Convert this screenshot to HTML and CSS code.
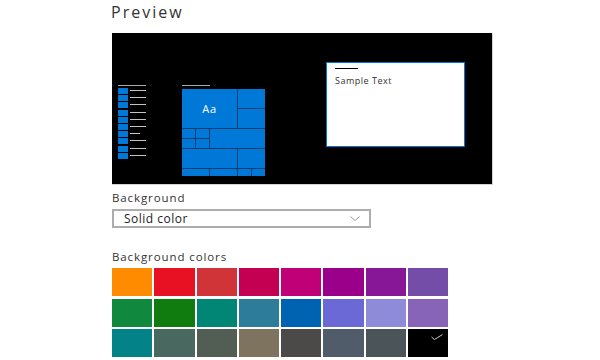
FILE: index.html
```html
<!DOCTYPE html>
<html lang="en">
<head>
  <meta charset="UTF-8">
  <title>Personalization - Background</title>
  <link rel="stylesheet" href="styles.css">
</head>
<body>

<h1 class="titulo">Preview</h1>

<div class="preview">
  <div class="inicio">
    <div class="raya"></div>
    <div class="lista">
      <div class="fila"><span class="cuadro"></span><span class="linea"></span></div>
      <div class="fila"><span class="cuadro"></span><span class="linea"></span></div>
      <div class="fila"><span class="cuadro"></span><span class="linea"></span></div>
      <div class="fila"><span class="cuadro"></span><span class="linea"></span></div>
      <div class="fila"><span class="cuadro"></span><span class="linea"></span></div>
      <div class="fila"><span class="cuadro"></span><span class="linea"></span></div>
      <div class="fila"><span class="cuadro"></span><span class="linea corta"></span></div>
      <div class="fila"><span class="cuadro"></span><span class="linea"></span></div>
      <div class="fila"><span class="cuadro"></span><span class="linea"></span></div>
      <div class="fila"><span class="cuadro"></span><span class="linea"></span></div>
    </div>
  </div>

  <div class="mosaico">
    <div class="raya"></div>
    <div class="tiles">
      <div class="tile t-grande">Aa</div>
      <div class="tile t-der1"></div>
      <div class="tile t-der2"></div>
      <div class="tile t-p1"></div>
      <div class="tile t-p2"></div>
      <div class="tile t-p3"></div>
      <div class="tile t-p4"></div>
      <div class="tile t-ancho"></div>
      <div class="tile t-fila5a"></div>
      <div class="tile t-fila5b"></div>
      <div class="tile t-fila6a"></div>
      <div class="tile t-fila6b"></div>
      <div class="tile t-fila6c"></div>
      <div class="tile t-fila6d"></div>
    </div>
  </div>

  <div class="ventana">
    <div class="ventana-barra"></div>
    <p class="ventana-texto">Sample Text</p>
  </div>
</div>

<p class="etiqueta">Background</p>

<div class="selector">
  <span class="selector-texto">Solid color</span>
  <svg class="chevron" width="10" height="5" viewBox="0 0 10 5">
    <path d="M0.5 0.5 L5 4.5 L9.5 0.5" fill="none" stroke="#9a9a9a" stroke-width="1"/>
  </svg>
</div>

<p class="etiqueta etiqueta-colores">Background colors</p>

<div class="colores">
  <div class="color" style="background:#ff8c00"></div>
  <div class="color" style="background:#e81123"></div>
  <div class="color" style="background:#d13438"></div>
  <div class="color" style="background:#c30052"></div>
  <div class="color" style="background:#bf0077"></div>
  <div class="color" style="background:#9a0089"></div>
  <div class="color" style="background:#881798"></div>
  <div class="color" style="background:#744da9"></div>

  <div class="color" style="background:#10893e"></div>
  <div class="color" style="background:#107c10"></div>
  <div class="color" style="background:#018574"></div>
  <div class="color" style="background:#2d7d9a"></div>
  <div class="color" style="background:#0063b1"></div>
  <div class="color" style="background:#6b69d6"></div>
  <div class="color" style="background:#8e8cd8"></div>
  <div class="color" style="background:#8764b8"></div>

  <div class="color" style="background:#038387"></div>
  <div class="color" style="background:#486860"></div>
  <div class="color" style="background:#525e54"></div>
  <div class="color" style="background:#7e735f"></div>
  <div class="color" style="background:#4c4a48"></div>
  <div class="color" style="background:#515c6b"></div>
  <div class="color" style="background:#4a5459"></div>
  <div class="color elegido" style="background:#000000">
    <svg class="check" width="12" height="6" viewBox="0 0 12 6">
      <path d="M0.5 3 L3.5 5.5 L11.5 0.5" fill="none" stroke="#c8c8c8" stroke-width="1"/>
    </svg>
  </div>
</div>

</body>
</html>
```

FILE: styles.css
```css
body {
  font-family: 'Open Sans', 'Noto Sans', sans-serif;
  background-color: #ffffff;
  color: #222;
  margin: 0;
  padding: 0 0 0 112px;
  overflow: hidden;
}

.titulo {
  margin: 0 0 0 -1px;
  padding-top: 2px;
  height: 20px;
  font-size: 16px;
  line-height: 20px;
  font-weight: 400;
  letter-spacing: 2px;
  color: #333;
}

/* caja negra de vista previa */
.preview {
  width: 381px;
  height: 152px;
  margin-top: 11px;
  background-color: #000;
  border-right: 1px solid #d4d4d4;
  border-bottom: 1px solid #d4d4d4;
  box-sizing: border-box;
  display: flex;
  align-items: flex-start;
  padding: 29px 0 0 6px;
}

.raya {
  height: 1px;
  width: 28px;
  background-color: #a8a8a8;
}

.inicio {
  margin-top: 23px;
  width: 28px;
}

.inicio .raya {
  margin-bottom: 2px;
}

.lista {
  display: flex;
  flex-direction: column;
  gap: 1.2px;
}

.fila {
  display: flex;
  align-items: flex-start;
  height: 6px;
}

.cuadro {
  width: 10px;
  height: 6px;
  background-color: #0078d7;
}

.linea {
  width: 16px;
  height: 1px;
  margin: 2px 0 0 1.5px;
  background-color: #c4c4c4;
}

.linea.corta {
  width: 10px;
}

.mosaico {
  margin: 23px 0 0 36px;
  width: 83px;
}

.mosaico .raya {
  margin-bottom: 3px;
}

.tiles {
  display: grid;
  grid-template-columns: 13px 13px 27px 13px 13px;
  grid-template-rows: 19px 19px 9px 9px 19px 7px;
  gap: 1px;
  background-color: #0a3d70;
}

.tile {
  background-color: #0078d7;
  color: #fff;
  font-size: 11px;
  letter-spacing: 0.6px;
  display: flex;
  align-items: center;
  justify-content: center;
}

.t-grande { grid-column: 1 / 4; grid-row: 1 / 3; }
.t-der1 { grid-column: 4 / 6; grid-row: 1; }
.t-der2 { grid-column: 4 / 6; grid-row: 2; }
.t-p1 { grid-column: 1; grid-row: 3; }
.t-p2 { grid-column: 2; grid-row: 3; }
.t-p3 { grid-column: 1; grid-row: 4; }
.t-p4 { grid-column: 2; grid-row: 4; }
.t-ancho { grid-column: 3 / 6; grid-row: 3 / 5; }
.t-fila5a { grid-column: 1 / 4; grid-row: 5; }
.t-fila5b { grid-column: 4 / 6; grid-row: 5; }
.t-fila6a { grid-column: 1 / 3; grid-row: 6; }
.t-fila6b { grid-column: 3; grid-row: 6; }
.t-fila6c { grid-column: 4; grid-row: 6; }
.t-fila6d { grid-column: 5; grid-row: 6; }

.ventana {
  margin-left: 61px;
  width: 139px;
  height: 85px;
  background-color: #fff;
  border: 1px solid #0078d7;
  padding: 5px 0 0 8px;
  box-sizing: border-box;
}

.ventana-barra {
  width: 23px;
  height: 1px;
  background-color: #000;
}

.ventana-texto {
  margin: 6px 0 0 0;
  font-size: 9px;
  line-height: 12px;
  letter-spacing: 0.5px;
  color: #333;
}

.etiqueta {
  margin: 6px 0 0 0;
  font-size: 11.5px;
  line-height: 14px;
  letter-spacing: 0.9px;
  color: #333;
}

.selector {
  margin-top: 4px;
  width: 259px;
  height: 19px;
  border: 2px solid #adadad;
  box-sizing: border-box;
  display: flex;
  align-items: center;
  justify-content: space-between;
  padding: 0 9px 0 10px;
}

.selector-texto {
  font-size: 12px;
  line-height: 15px;
  letter-spacing: 0.5px;
  color: #222;
}

.chevron {
  display: block;
}

.etiqueta-colores {
  margin-top: 22px;
}

.colores {
  margin-top: 4px;
  display: grid;
  grid-template-columns: repeat(8, 40.3px);
  grid-auto-rows: 28px;
  column-gap: 2px;
  row-gap: 2.5px;
}

.color {
  position: relative;
}

.check {
  position: absolute;
  top: 5px;
  right: 5px;
}
```
